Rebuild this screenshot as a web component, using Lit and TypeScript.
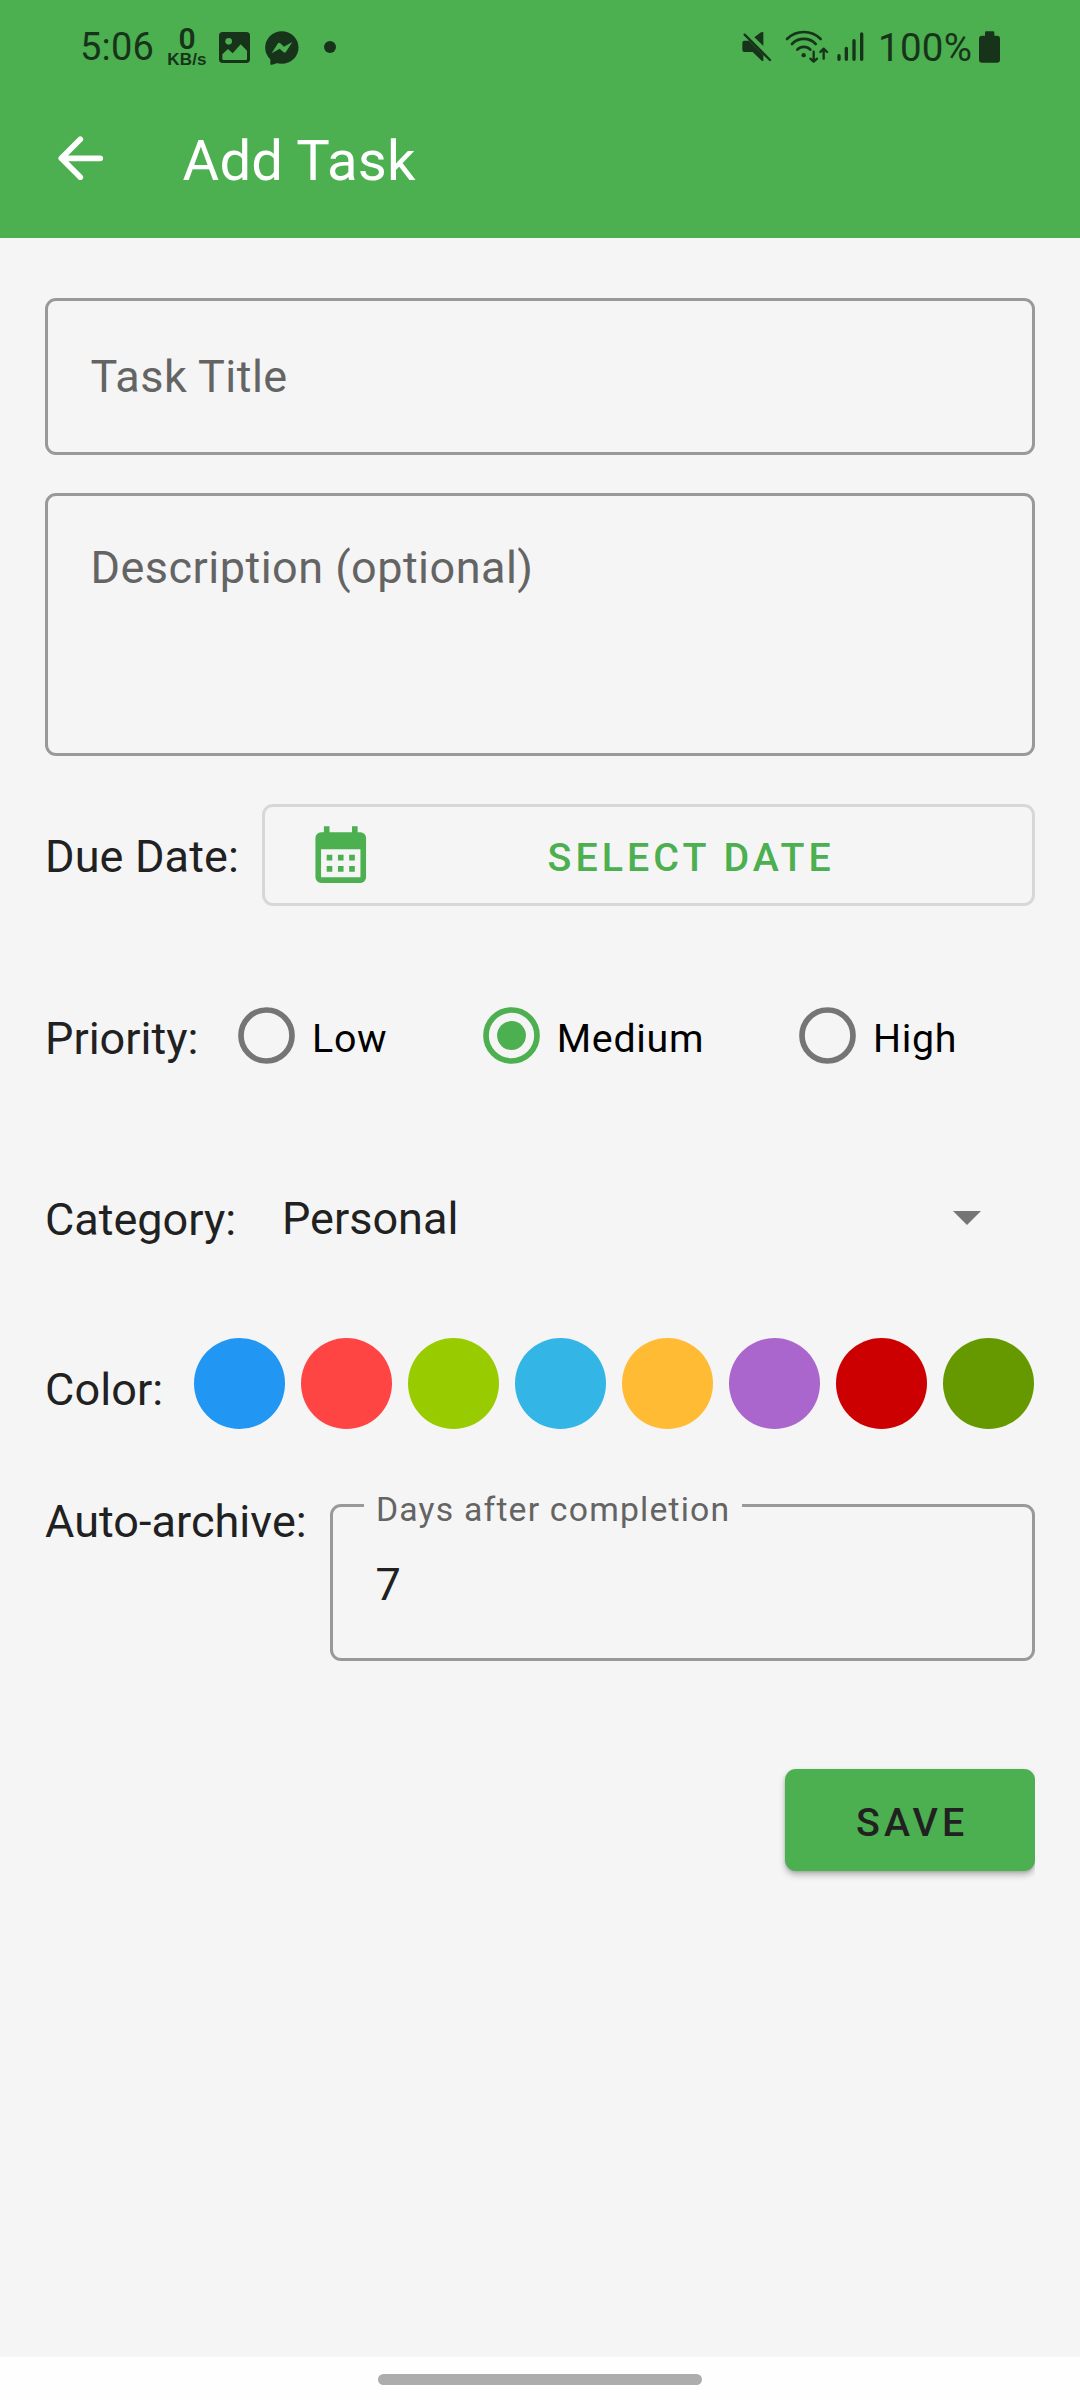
import { LitElement, html, svg, css, nothing } from "lit";
import { customElement, property, state } from "lit/decorators.js";
import { classMap } from "lit/directives/class-map.js";
import { styleMap } from "lit/directives/style-map.js";

@customElement("status-bar")
export class StatusBar extends LitElement {
  static styles = css`
    :host {
      display: flex;
      justify-content: space-between;
      align-items: flex-start;
      height: 88px;
      padding: 0 80px 0 80px;
      box-sizing: border-box;
      color: #17341a;
      fill: currentColor;
      font: 400 38px/44px Roboto, sans-serif;
    }
    .group { display: flex; align-items: flex-start; }
    svg { display: block; flex: none; }
    .line { fill: none; stroke: currentColor; stroke-linecap: round; stroke-linejoin: round; }
    .cutout { fill: #4caf50; }
    .time { width: 87px; padding-top: 25px; letter-spacing: 0.2px; }
    .speed {
      display: flex;
      flex-direction: column;
      align-items: center;
      width: 40px;
      padding-top: 24px;
      margin-right: 12px;
    }
    .rate { font-size: 30px; line-height: 29px; font-weight: 600; }
    .unit { font: 700 17px/13px "Liberation Sans", Arial, sans-serif; letter-spacing: 0.2px; }
    .picture { margin: 32px 15px 0 0; }
    .chat { margin: 31px 25px 0 0; }
    .more { width: 12px; height: 12px; margin-top: 41px; border-radius: 50%; background: currentColor; }
    .mute { margin: 31px 13px 0 0; }
    .wifi { margin: 29px 8px 0 0; }
    .signal { margin: 31px 14px 0 0; }
    .percent { width: 101px; padding-top: 26px; font-size: 38.5px; letter-spacing: 0.3px; }
    .battery { margin-top: 31px; }
  `;

  render() {
    return html`
      <div class="group">
        <span class="time">5:06</span>
        <span class="speed"><span class="rate">0</span><span class="unit">KB/s</span></span>
        <svg class="picture" width="31" height="31" viewBox="477 66 93 93">
          <rect x="477" y="66" width="93" height="93" rx="11" />
          <circle class="cutout" cx="506" cy="94" r="10" />
          <path class="cutout" d="M487 133 504 117 518 130 542 103 561 122V146Q561 150 557 150H491Q487 150 487 146Z" />
        </svg>
        <svg class="chat" width="34" height="34" viewBox="614 62 102 102">
          <ellipse cx="664.5" cy="111.5" rx="50" ry="49" />
          <path d="M630 142V160Q630 165 635 163L654 157Z" />
          <path class="cutout" d="M634 129 653 99Q656 96 660 99L671 109 696 95 677 124Q674 129 669 125L658 115Z" />
        </svg>
        <span class="more"></span>
      </div>
      <div class="group">
        <svg class="mute" width="31" height="31" viewBox="60 63 93 93">
          <path d="M70 92H84L127 135V153H123L95 126H70Q64 126 64 120V98Q64 92 70 92ZM127 66V108L100 82 120 67Z" />
          <path class="line" stroke-width="7" d="M71 74 147 150" />
        </svg>
        <svg class="wifi" width="44" height="36" viewBox="192 57 132 108">
          <g class="line" stroke-width="8">
            <path d="M198 87A71 71 0 0 1 299 87M213 102A49 49 0 0 1 284 102M229 119A27 27 0 0 1 268 119" />
            <path stroke-width="7" d="M278 125V154M268 146 278 155 288 146M308 146V117M298 126 308 116 318 126" />
          </g>
          <circle cx="248" cy="135.5" r="6.5" />
        </svg>
        <svg class="signal" width="27" height="31" viewBox="350 63 81 93">
          <path class="line" stroke-width="10" d="M356 137V148M378 115V148M401 92V148M424 72V148" />
        </svg>
        <span class="percent">100%</span>
        <svg class="battery" width="21" height="32" viewBox="777 63 63 96">
          <rect x="777" y="77" width="63" height="81" rx="9" />
          <rect x="795" y="64" width="28" height="20" rx="4" />
        </svg>
      </div>
    `;
  }
}

@customElement("app-header")
export class AppHeader extends LitElement {
  @property() heading = "";

  static styles = css`
    :host {
      display: flex;
      align-items: flex-start;
      height: 150px;
      padding-left: 58px;
      box-sizing: border-box;
      color: #fff;
    }
    .back { display: block; margin-top: 47.7px; }
    .heading { margin: 40px 0 0 79.2px; font: 400 56.25px/66px Roboto, sans-serif; letter-spacing: 0.2px; }
  `;

  render() {
    return html`
      <svg class="back" width="45.3" height="44.7" viewBox="84 77 136 134" fill="none" stroke="currentColor"
        stroke-width="17" stroke-linecap="round" stroke-linejoin="round">
        <path d="M211 144H94M151 87 94 144 151 201" />
      </svg>
      <span class="heading">${this.heading}</span>
    `;
  }
}

@customElement("radio-option")
export class RadioOption extends LitElement {
  @property() label = "";
  @property({ type: Boolean }) checked = false;

  static styles = css`
    :host { display: flex; align-items: flex-start; gap: 17px; color: #000; cursor: pointer; }
    .ring { display: block; color: #757575; }
    .ring.on { color: #4caf50; }
    .label { margin-top: 8px; font: 400 39.375px/47px Roboto, sans-serif; letter-spacing: 0.0178em; }
  `;

  render() {
    return html`
      <svg class=${classMap({ ring: true, on: this.checked })} width="57" height="57" viewBox="0 0 57 57">
        <circle cx="28.5" cy="28.5" r="25.5" fill="none" stroke="currentColor" stroke-width="5.7" />
        ${this.checked ? svg`<circle cx="28.5" cy="28.5" r="14.4" fill="currentColor" />` : nothing}
      </svg>
      <span class="label">${this.label}</span>
    `;
  }
}

@customElement("app-root")
export class AppRoot extends LitElement {
  @state() private priority = "Medium";

  private readonly priorities = ["Low", "Medium", "High"];
  private readonly colors = [
    "#2196f3", "#ff4444", "#99cc00", "#33b5e5", "#ffbb33", "#aa66cc", "#cc0000", "#669900",
  ];

  static styles = css`
    :host {
      display: flex;
      flex-direction: column;
      width: 1080px;
      height: 2400px;
      background: #f5f5f5;
      color: #212121;
      font: 400 45px/53px Roboto, sans-serif;
    }
    .top { height: 238px; background: #4caf50; }
    .form { flex: 1; display: flex; flex-direction: column; padding: 60px 45px 0; }
    .field {
      box-sizing: border-box;
      border: 3px solid #999;
      border-radius: 11px;
      padding-left: 42.5px;
    }
    .hint { color: #646464; letter-spacing: 0.0105em; }
    .title { height: 157px; padding-top: 49px; }
    .description { height: 263px; padding-top: 45px; margin-top: 38px; }
    .row { display: flex; align-items: flex-start; }
    .label { flex: none; white-space: nowrap; }

    .due { margin-top: 48px; }
    .due .label { width: 217px; margin-top: 26px; letter-spacing: 0.003em; }
    .date {
      flex: 1;
      display: flex;
      align-items: flex-start;
      height: 102px;
      box-sizing: border-box;
      padding-left: 42px;
      border: 3px solid #d7d7d7;
      border-radius: 11px;
      color: #4caf50;
    }
    .calendar { flex: none; margin-top: 14px; }
    .date-text { flex: 1; margin: 27px 0 0 173px; }
    .button-text { font: 500 39.375px/47px Roboto, sans-serif; letter-spacing: 4.06px; }

    .priority { height: 57px; margin-top: 101px; }
    .priority .label { width: 193px; margin-top: 5px; }
    .options { flex: 1; display: grid; grid-template-columns: 244.8px 316.2px 1fr; }

    .category { height: 57px; margin-top: 126px; }
    .category .label { width: 237px; margin-top: 3px; }
    .select { flex: 1; display: flex; align-items: flex-start; justify-content: space-between; padding-right: 54px; }
    .value { margin-top: 2px; }
    .caret { display: block; margin-top: 21px; }

    .color { height: 91px; margin-top: 91px; }
    .color .label { width: 149px; margin-top: 25px; letter-spacing: 0.002em; }
    .swatches { flex: 1; display: flex; gap: 16px; }
    .swatch { width: 91px; height: 91px; border-radius: 50%; }

    .archive { margin-top: 66px; }
    .archive .label { width: 285px; letter-spacing: 0.001em; }
    .days { position: relative; flex: 1; height: 157px; margin-top: 9px; padding-top: 51px; }
    .legend {
      position: absolute;
      left: 31px;
      top: -17px;
      padding: 0 12px;
      background: #f5f5f5;
      color: #646464;
      font-size: 33.75px;
      line-height: 39px;
      letter-spacing: 0.035em;
      white-space: nowrap;
    }

    .save {
      align-self: flex-end;
      width: 250px;
      height: 102px;
      box-sizing: border-box;
      margin-top: 108px;
      padding: 30px 0 0 71px;
      border-radius: 11px;
      background: #4caf50;
      box-shadow: 0 4px 6px rgba(0, 0, 0, 0.26), 0 1px 3px rgba(0, 0, 0, 0.12);
      clip-path: inset(-10px 0 -20px -10px);
    }
    .nav { display: flex; justify-content: center; align-items: flex-start; height: 43px; background: #fefefe; }
    .pill { width: 324px; height: 11px; margin-top: 17px; border-radius: 6px; background: #adadad; }
  `;

  render() {
    return html`
      <div class="top">
        <status-bar></status-bar>
        <app-header heading="Add Task"></app-header>
      </div>
      <div class="form">
        <div class="field title hint">Task Title</div>
        <div class="field description hint">Description (optional)</div>

        <div class="row due">
          <span class="label">Due Date:</span>
          <div class="date">
            <svg class="calendar" width="67.5" height="67.5" viewBox="0 0 24 24" fill="currentColor" fill-rule="evenodd">
              <path d="M6 1.9H8V4H16V1.9H18V4H19A2 2 0 0 1 21 6V20A2 2 0 0 1 19 22H5A2 2 0 0 1 3 20V6A2 2 0 0 1 5 4H6ZM5 10V20H19V10ZM7 12H9V14H7ZM11 12H13V14H11ZM15 12H17V14H15ZM7 16H9V18H7ZM11 16H13V18H11ZM15 16H17V18H15Z" />
            </svg>
            <span class="button-text date-text">SELECT DATE</span>
          </div>
        </div>

        <div class="row priority">
          <span class="label">Priority:</span>
          <div class="options">
            ${this.priorities.map(
              (p) => html`<radio-option .label=${p} ?checked=${p === this.priority} @click=${() => (this.priority = p)}></radio-option>`,
            )}
          </div>
        </div>

        <div class="row category">
          <span class="label">Category:</span>
          <div class="select">
            <span class="value">Personal</span>
            <svg class="caret" width="28" height="14" viewBox="0 0 28 14" fill="#757575"><path d="M0 0H28L14 14Z" /></svg>
          </div>
        </div>

        <div class="row color">
          <span class="label">Color:</span>
          <div class="swatches">
            ${this.colors.map((c) => html`<span class="swatch" style=${styleMap({ background: c })}></span>`)}
          </div>
        </div>

        <div class="row archive">
          <span class="label">Auto-archive:</span>
          <div class="field days"><span class="legend">Days after completion</span>7</div>
        </div>

        <div class="save button-text">SAVE</div>
      </div>
      <div class="nav"><span class="pill"></span></div>
    `;
  }
}
